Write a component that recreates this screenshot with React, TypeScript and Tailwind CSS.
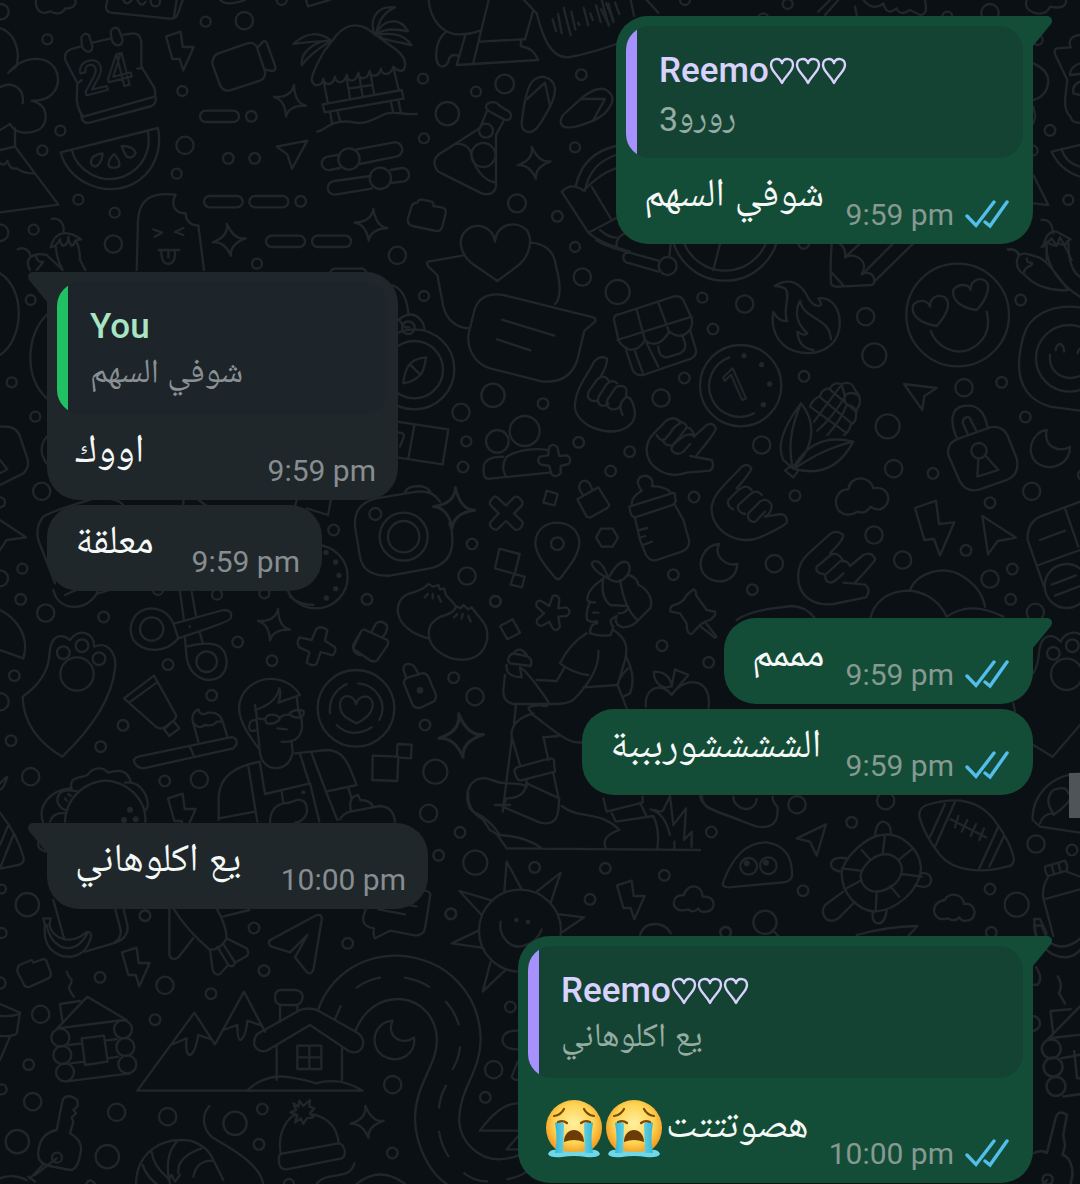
import { clsx } from 'clsx';
import type { ReactNode } from 'react';

type Circle = [number, number, number];

interface DoodleArea {
  x: number;
  y: number;
  scale?: number;
  circles: Circle[];
  dots?: Circle[];
  paths: string[];
}

interface Quote {
  author: string;
  hearts?: number;
  text: string;
}

interface Message {
  id: number;
  mine: boolean;
  text: string;
  time: string;
  size: string;
  spacing: string;
  first?: boolean;
  sobs?: number;
  quote?: Quote;
}

const messages: Message[] = [
  {
    id: 1,
    mine: true,
    text: 'شوفي السهم',
    time: '9:59 pm',
    size: 'w-[417px]',
    spacing: '',
    first: true,
    quote: { author: 'Reemo', hearts: 3, text: 'رورو3' },
  },
  {
    id: 2,
    mine: false,
    text: 'اووك',
    time: '9:59 pm',
    size: 'w-[351px]',
    spacing: 'mt-7',
    first: true,
    quote: { author: 'You', text: 'شوفي السهم' },
  },
  { id: 3, mine: false, text: 'معلقة', time: '9:59 pm', size: 'w-[275px]', spacing: 'mt-[5px]' },
  { id: 4, mine: true, text: 'مممم', time: '9:59 pm', size: 'w-[309px]', spacing: 'mt-[27px]', first: true },
  { id: 5, mine: true, text: 'الششششوربببة', time: '9:59 pm', size: 'w-[451px]', spacing: 'mt-[5px]' },
  { id: 6, mine: false, text: 'يع اكلوهاني', time: '10:00 pm', size: 'w-[381px]', spacing: 'mt-7', first: true },
  {
    id: 7,
    mine: true,
    text: 'هصوتتتت',
    time: '10:00 pm',
    size: 'w-[515px]',
    spacing: 'mt-[27px]',
    first: true,
    sobs: 2,
    quote: { author: 'Reemo', hearts: 3, text: 'يع اكلوهاني' },
  },
];

// Each area is drawn on its own canvas, three units to a pixel unless it has a scale
const areas: DoodleArea[] = [
  {
    x: 0,
    y: 0,
    circles: [
      [142, 118, 15], [617, 65, 15], [547, 273, 15], [754, 349, 16], [181, 392, 15], [127, 451, 15],
      [685, 475, 16], [764, 475, 16], [530, 521, 15], [235, 599, 15], [344, 638, 15], [902, 604, 16],
      [101, 689, 15], [771, 791, 15], [845, 0, 15], [733, 62, 26], [555, 436, 26], [340, 732, 26],
      [3, 35, 23], [0, 698, 25], [466, 5, 14],
    ],
    paths: [
      'M108 0C104 35 130 45 150 34C170 45 190 40 195 25C220 25 230 15 226 0',
      'M322 0L318 20Q318 36 334 38L508 56Q528 58 534 40L548 0M522 50L530 0M370 0q10 20 25 0M412 0q12 25 25 5M660 0Q680 20 735 0M918 0L924 19L990 0',
      'M240 140L215 147Q190 155 196 180L232 250L230 300Q235 335 250 350L464 290Q470 270 455 250L424 200V125Q420 100 400 100L370 104M278 128L330 116M232 250L245 240M412 206L428 204M243 345L247 360Q255 372 270 368L455 318Q470 310 467 290',
      'M244 112Q252 96 266 104L277 138Q278 155 264 155Q250 152 246 138ZM332 94Q340 78 355 86L368 118Q368 136 352 136Q338 132 335 118Z',
      'M640 175Q634 188 640 200L660 255Q668 275 690 271L780 242Q797 235 795 215L770 140Q760 125 742 130L655 160Q643 165 640 175ZM773 142L790 124Q797 122 800 128L826 200Q828 214 815 213L795 209',
      'M182 457L474 384C485 440 470 520 390 556C300 590 205 540 182 457ZM215 449C230 510 300 555 370 530C430 505 455 450 443 392',
      'M308 460Q270 465 273 490Q285 510 300 488Q308 475 308 460ZM342 462Q320 485 328 500Q345 508 358 498Q360 480 342 462ZM365 438Q400 438 407 458Q398 478 380 470Q370 455 365 438Z',
      'M617 332H700a17 17 0 0 1 0 34H617a17 17 0 0 1 0 -34ZM629 588H711a17 17 0 0 1 0 34H629a17 17 0 0 1 0 -34ZM765 588H848a17 17 0 0 1 0 34H765a17 17 0 0 1 0 -34ZM815 707H898a17 17 0 0 1 0 34H815a17 17 0 0 1 0 -34ZM953 707H1036a17 17 0 0 1 0 34H953a17 17 0 0 1 0 -34ZM1010 806H1080a17 17 0 0 1 20 20H990a17 17 0 0 1 20 -20Z',
      'M830 440L922 422L876 506L862 463Z',
      'M0 84C40 95 65 150 48 200L25 218C70 165 140 165 165 205C190 255 160 305 95 302C150 315 145 375 115 390C80 405 45 400 30 372L0 390M0 262C35 240 75 265 68 310M45 385V440M0 450L45 440L175 614L0 637M0 490Q15 500 22 482Q30 510 50 505Q70 520 100 520',
      'M410 810L414 660C418 600 450 575 527 584C510 615 525 640 557 640C558 665 575 678 595 676L612 810M460 688L486 698L464 710M550 684L525 696L550 705M476 750H538M484 755Q484 792 505 792Q527 790 525 755M505 755V772',
      'M155 657C180 650 195 675 190 695M152 742C165 690 205 690 243 718L225 722Q222 735 215 738Q205 725 205 710Q205 735 188 738Q180 730 180 718Q170 740 152 742ZM168 742Q170 780 188 810M228 722Q240 745 240 780L256 810M53 748C75 738 90 755 90 765M90 810C70 775 100 755 140 765L188 810M108 770Q115 790 130 785Q120 800 110 810',
    ],
  },
  {
    x: 300,
    y: 0,
    circles: [
      [369, 236, 15], [528, 275, 15], [844, 224, 16], [372, 415, 15], [825, 442, 15], [772, 649, 16],
      [825, 741, 15], [372, 888, 15], [614, 252, 28], [651, 610, 27], [292, 766, 26], [847, 831, 26],
      [442, 341, 35], [953, 876, 36], [147, 477, 32], [241, 535, 32], [558, 392, 21], [550, 465, 36],
    ],
    paths: [
      'M45 255Q30 245 38 225Q50 190 75 150L110 105Q150 60 200 85L290 150Q325 180 312 208Q300 220 280 200Q275 220 258 222Q245 222 243 206Q238 225 225 227Q210 228 209 213Q205 232 190 235Q176 234 175 218Q170 240 155 242Q142 240 140 225Q135 245 120 247Q106 245 105 230Q100 250 86 252Q70 250 70 236Q68 258 45 255Z',
      'M72 250L83 305M282 210L296 270M140 235L150 293M178 228L188 288M212 222L222 280M150 265L215 255M68 313L305 270L311 296L74 337ZM90 335L97 373M112 332L120 362M272 303L279 335M295 300L302 335M52 395C80 390 85 360 150 365C200 380 230 350 260 340C300 335 310 345 350 342',
      'M225 105C205 60 230 15 285 22C245 40 235 70 228 102C250 55 300 50 324 94C285 85 255 85 228 102M228 104C260 100 310 95 334 136C300 125 260 125 240 110M93 122C60 95 20 95 -20 132C20 125 60 125 93 122C55 120 0 150 5 196Q30 160 93 122',
      'M118 464L83 470A20 20 0 0 0 88 510L120 504M180 492L288 470A20 20 0 0 0 282 427L170 448M272 510L305 504A20 20 0 0 1 308 545L272 549M212 528L102 543A20 20 0 0 0 106 584L215 566',
      'M352 608Q355 597 366 599L395 605Q402 608 400 618L425 622Q440 626 437 640L427 680Q422 695 408 693L338 678Q320 672 324 655L335 618Q340 608 352 608Z',
      'M386 0C390 60 430 105 480 103Q515 102 540 92M566 0L520 188M496 105L470 195L715 180C700 150 690 145 662 138L664 118L675 118L700 30M540 125L664 118M435 98C400 130 405 190 420 198Q440 205 448 175Q455 160 475 168M672 0L710 40C725 100 750 180 810 171Q870 160 950 132',
      'M758 58L768 93M774 42L785 100M791 24L812 106M814 35L826 88M834 68L838 74M851 24L865 76M871 40L878 60M888 16L902 66M905 0L926 76M925 10L940 66M945 8L958 42',
      'M560 335L540 384L418 462Q395 480 408 505Q412 515 425 520L545 580Q580 590 588 560V405L612 360M565 310Q585 300 600 318L628 335Q640 350 625 360Q615 362 600 352L565 332Q550 320 565 310ZM470 432Q500 430 512 455C520 500 550 545 588 547',
      'M670 330C680 270 690 230 730 230C775 240 770 280 750 320C725 365 710 395 690 396Q660 395 666 360ZM680 298L735 248L750 318M785 375Q775 355 800 335L850 290Q890 260 915 268Q945 285 935 310Q920 345 880 362Q800 395 785 375ZM842 297H915L880 360',
      'M828 555Q850 460 948 438M855 572Q870 490 948 465M785 575Q815 545 850 572Q900 520 948 505M785 575L865 698L948 655M875 560L935 660M865 698Q900 730 990 755M900 690Q930 715 948 712M950 745Q945 710 975 700',
      'M585 725C580 680 530 665 500 690C470 715 480 760 515 790L592 843L650 800C690 770 700 720 680 690C650 660 590 670 585 725ZM487 767L385 785Q378 790 385 800L412 825L430 920C440 960 470 985 510 985M690 728C740 730 765 760 768 800Q782 850 778 880Q775 905 765 912',
    ],
  },
  {
    x: 600,
    y: 0,
    circles: [
      [563, 12, 15], [1170, 38, 26], [255, 0, 15], [1350, 391, 16], [1405, 600, 15], [1313, 120, 15],
      [1298, 452, 15], [1042, 50, 15], [490, 55, 15],
    ],
    paths: [
      'M1280 0Q1270 30 1310 40Q1340 45 1350 20Q1400 30 1398 0M3 28L27 76M18 10L40 60M140 0L175 38M92 0L102 48M655 35L690 0M675 45L715 0M770 45L765 20M790 0Q820 35 850 10Q860 50 890 25Q900 50 930 30L960 45Q985 45 975 0',
      'M1440 105Q1400 110 1412 142L1370 145Q1360 150 1366 165L1402 240L1395 300Q1395 340 1412 350Q1415 370 1440 368M1440 190Q1410 200 1410 225L1440 222M1440 245Q1415 255 1420 280L1440 285M1300 190Q1345 210 1345 245Q1340 290 1300 300',
      'M1355 455L1440 435M1355 455Q1380 510 1440 530M1385 450Q1400 490 1440 500M1300 525L1345 615L1300 610M1300 320L1306 350L1300 370',
      'M1325 660Q1355 655 1360 700M1330 740Q1340 690 1370 695L1412 718L1400 725L1395 738L1380 712L1370 738L1355 715L1330 740M1340 740V780M1395 740L1415 780M1225 750Q1250 745 1255 765',
    ],
  },
  {
    x: 0,
    y: 260,
    circles: [
      [92, 120, 15], [35, 367, 15], [106, 470, 15], [125, 694, 26], [67, 926, 15], [1001, 810, 16],
      [0, 727, 15], [0, 955, 24],
    ],
    paths: [
      'M0 40C80 90 70 240 0 285M140 165C80 220 70 350 140 415M0 500Q50 495 60 530L82 595Q90 620 70 640L0 675M0 600L22 628L0 640M0 780L78 832L20 840L0 870M140 530Q110 570 140 610M130 770C160 750 240 730 280 715Q350 710 370 735M130 770Q105 800 115 840L165 970M590 715L620 738M550 718V735M890 720L885 738M993 718L984 765L920 745',
    ],
  },
  {
    x: 390,
    y: 240,
    circles: [
      [937, 173, 15], [969, 267, 16], [883, 414, 16], [459, 491, 16], [229, 604, 15], [219, 681, 16],
      [566, 607, 16], [719, 635, 16], [662, 693, 16], [912, 771, 16], [246, 912, 16], [850, 1004, 16],
      [316, 1084, 16], [213, 517, 26], [813, 474, 26], [231, 1008, 26], [309, 466, 35], [73, 388, 120],
      [73, 389, 86], [55, 263, 19], [322, 604, 34], [404, 573, 45], [502, 911, 19], [1005, -40, 162],
      [1005, -40, 132], [833, 78, 27], [41, 890, 72], [41, 890, 47], [-44, 822, 18],
    ],
    paths: [
      'M255 205Q275 155 340 165L610 232Q622 240 612 248L583 272L562 360C545 410 510 430 455 424L300 385C250 370 230 320 236 280ZM336 239L493 287M321 298L421 331',
      'M25 240Q60 210 88 235Q105 255 103 270M5 135Q50 150 55 222M108 352Q70 355 55 378Q42 400 40 430Q75 425 95 400Q105 380 108 352ZM60 373L90 403M25 238L45 262H58',
      'M20 545L175 568L158 673L20 652M73 556L55 655M22 578Q50 575 38 600L30 620',
      'M475 630Q400 620 350 650Q330 680 348 710M340 650Q290 650 282 675Q275 720 300 716L478 698M478 620Q490 608 502 622L508 648L532 646Q548 660 535 672L512 678L512 700Q498 716 484 702L478 678L452 674Q438 662 450 650L474 646Z',
      'M348 797L372 772Q380 766 390 776Q402 786 396 796L372 820L398 846Q400 856 390 866Q382 872 374 868L348 843L322 868Q312 872 304 862Q296 852 302 846L326 820L302 796Q296 788 306 776Q314 766 322 772Z',
      'M504 1018Q495 1015 485 1000C450 960 435 930 436 905C440 865 470 848 502 848C540 850 565 870 568 905C568 940 545 970 520 1003Q512 1016 504 1018Z',
      'M470 752L503 762L494 796L460 788ZM328 926L389 942L374 1002L315 985ZM372 1002L404 1010L396 1042L362 1034ZM618 893L633 866H668L684 893L668 920H635Z',
      'M562 778L625 742L658 795Q655 805 645 808L600 833L590 830ZM580 765Q560 745 572 728Q585 715 598 730L608 750',
      'M718 800L845 760Q858 755 855 775Q862 785 848 795L735 832Q722 832 718 800ZM725 792Q725 770 755 752Q735 725 750 712Q770 700 785 718Q790 730 785 738Q830 740 842 758M735 835L750 900L768 945Q780 965 800 960L875 935Q900 925 897 900L880 840L855 795M748 870L772 864M750 893L766 888M758 915L786 905',
      'M655 420Q640 400 620 420L596 455Q588 475 605 482Q615 485 625 480M682 430Q665 415 648 435L626 470Q618 490 635 497Q645 500 655 490M708 468Q715 435 690 438Q680 438 675 445L652 480Q645 500 665 508Q690 510 693 490M710 470Q730 475 735 520C735 560 690 580 645 573C590 565 550 530 555 490C560 440 590 410 612 365Q630 345 650 355Q655 370 632 410M710 470Q680 490 698 525',
      'M770 630C770 590 800 575 825 545Q850 525 870 545Q890 550 890 562Q910 565 912 590L950 555Q970 545 978 565Q975 580 920 645M900 648L965 660Q975 680 960 692L890 698C830 720 770 680 770 630M870 550Q850 560 840 580L825 598Q810 605 800 585M890 562L870 590L848 615Q830 620 820 605M912 590Q900 570 860 605Q842 620 845 630Q860 650 880 635L900 612',
      'M672 240Q670 225 690 222L850 170Q870 165 880 180L905 235Q910 260 895 275Q870 300 838 275Q820 305 800 310Q780 315 765 300Q745 335 715 328Q690 315 685 298ZM740 210L765 300M805 188L838 278M682 300L905 230M708 330L728 390Q738 408 760 405L905 355Q920 345 918 330L900 270M735 335L758 398M770 310L805 380M805 320Q805 350 830 352L870 340Q890 330 885 310L878 288',
      'M987 912C940 915 920 970 940 1000C970 1040 1040 1030 1042 972C1010 980 970 950 987 912Z',
      'M618 0Q640 15 690 30L805 62M720 38Q700 38 700 50Q700 68 720 70L805 95M838 50L842 12M990 12L970 90',
      'M178 850Q187 870 187 895Q190 970 120 985L0 1007Q-80 1010 -90 950L-105 860Q-110 790 -40 775L80 755Q130 750 150 785M45 755Q55 738 85 738Q115 740 122 758',
    ],
  },
  {
    x: 730,
    y: 240,
    circles: [
      [221, 10, 16], [872, 180, 16], [222, 409, 16], [815, 427, 16], [886, 531, 16], [609, 700, 16],
      [195, 767, 16], [780, 788, 16], [708, 931, 16], [847, 987, 16], [67, 1049, 16], [842, 1078, 16],
      [1060, 705, 16], [44, 192, 26], [407, 230, 26], [95, 615, 26], [702, 443, 26], [491, 686, 26],
      [905, 754, 26], [432, 885, 26], [518, 960, 26], [133, 971, 26], [780, 1017, 26], [916, 1117, 26],
      [433, 346, 36], [473, 559, 36], [32, 437, 122], [683, 225, 154], [1018, 355, 100], [747, 632, 23],
      [1010, 1038, 66],
    ],
    dots: [[42, 347, 8], [95, 374, 8], [119, 432, 8], [100, 494, 8]],
    paths: [
      'M-2 352A92 92 0 1 0 72 520',
      'M134 138C180 110 215 130 235 175Q255 205 272 195Q275 185 265 175C310 170 335 215 328 265C320 320 270 345 215 338C150 330 120 275 130 215Q145 245 172 243C155 215 185 165 165 145Q150 138 134 138ZM210 182C190 220 205 255 232 280Q220 290 202 275C205 310 220 325 250 330M210 182C220 240 300 230 303 298',
      'M305 12Q300 80 303 132Q310 142 330 140L425 135Q435 130 433 118Q425 90 395 103C420 60 370 35 345 52Q350 20 320 5M345 52L390 10M405 95L495 5M433 125L555 5M305 98L342 138',
      'M600 200C590 175 560 180 550 195C540 225 570 250 620 258C650 225 665 190 645 172C620 160 600 175 600 200ZM722 150C715 130 685 130 670 150C665 185 700 205 740 210C770 180 785 135 765 122C745 110 720 125 722 150ZM602 273C620 320 670 345 715 330C760 310 785 270 770 215',
      'M833 28Q860 25 868 45M885 105C850 85 855 40 885 40L920 50C945 55 970 90 1015 150C960 155 910 135 885 105M890 55Q890 70 905 68Q910 75 895 80Q885 85 880 100M950 15C945 80 1000 140 1050 170M1015 5Q1015 90 1050 110M935 20L950 5Q975 25 985 10L1000 15',
      'M1050 202C960 190 895 230 880 290C855 380 860 470 960 500L1050 512M977 330Q980 310 992 312Q1003 320 1002 335M960 345C955 390 990 415 1025 414Q1040 412 1050 408M1043 340Q1045 325 1055 325',
      'M240 500Q245 480 270 468Q275 445 300 445Q310 425 335 432Q365 420 375 450Q395 470 388 495Q380 505 378 520Q380 545 362 555Q358 575 342 585M240 500L348 578M268 470L365 550M298 447L378 515M335 435Q345 460 345 485M252 545L330 440M262 572Q310 530 350 462Q370 455 382 465M292 585Q330 545 350 495Q365 495 378 510',
      'M213 490C160 560 140 620 160 660L188 685C240 640 270 560 213 490ZM213 490C180 570 175 620 188 685M188 685C220 630 270 580 370 605C330 680 270 710 188 685ZM370 605C310 620 260 640 195 685M165 692L182 678L205 692L190 712Z',
      'M522 432L620 444L583 468L577 510ZM757 828L858 893L803 903L774 943Z',
      'M655 645Q650 610 680 598L780 562Q815 555 832 585L860 655Q870 700 835 718L750 748Q710 760 690 725ZM682 598C660 550 660 505 700 498C745 490 765 520 772 560M712 580L698 548Q700 528 718 532L738 570M745 655L742 710L805 690L765 645',
      'M950 570C905 575 885 640 920 668C965 700 1020 670 1020 620C985 640 940 620 950 570Z',
      'M355 748C360 705 420 705 430 745C480 735 490 795 450 808Q435 810 422 800Q405 825 382 815C350 835 315 820 318 780Q325 748 355 748Z',
      'M555 804L618 782L627 852L673 847L630 946L612 897L583 900Z',
      'M1050 785L930 830Q890 850 893 900L942 1040M925 975L1050 930M1005 805L1045 920M930 900L1005 872M965 1034L1038 1006M975 1067L1050 1038',
      'M302 945Q320 935 335 955L340 965Q350 960 360 978L400 945Q425 932 436 958Q430 970 375 1028M340 1028L405 1034Q425 1050 408 1072L310 1092C240 1100 200 1060 205 1000C210 950 240 940 300 882Q320 868 340 885Q340 900 300 940M302 945L260 980Q255 1000 280 1002M335 960L285 1005Q285 1028 305 1028Q320 1020 340 1000',
      'M540 1050C560 1000 640 970 700 1010Q755 1045 765 1100M420 1140C440 1030 600 1020 650 1130Q720 1080 820 1130M20 1140Q60 1110 185 1098Q230 1100 255 1135',
      'M105 830L155 822Q175 830 170 848Q160 860 90 892C20 920 -60 870 -55 800C-50 760 -10 730 35 680Q55 668 64 685Q60 700 20 745M65 750Q50 730 25 750L-5 780Q-10 800 10 808M95 765Q80 745 58 765L25 795Q18 815 45 822M105 830Q125 820 125 795Q110 770 90 785L55 820Q50 845 75 846L105 815',
    ],
  },
  {
    x: 0,
    y: 590,
    circles: [
      [62, 28, 16], [311, 81, 16], [713, 156, 16], [816, 212, 16], [504, 224, 16], [43, 257, 16],
      [635, 316, 16], [369, 406, 16], [302, 470, 16], [33, 452, 16], [494, 573, 16], [651, 14, 15],
      [793, 10, 15], [474, 0, 15], [435, 977, 16], [5, 897, 13], [137, 69, 26], [92, 560, 26],
      [598, 568, 26], [0, 335, 26], [82, 944, 35], [190, 188, 19], [246, 167, 19], [297, 206, 19],
      [231, 252, 50], [455, 117, 35], [620, 215, 31], [948, -40, 95],
    ],
    dots: [
      [978, -113, 8], [1007, -84, 8], [1017, -44, 8], [1007, -4, 8], [979, 24, 8],
      [390, 659, 9], [407, 688, 9], [372, 690, 9], [569, 110, 4], [910, 607, 6],
    ],
    paths: [
      'M0 60C50 85 90 140 70 205L0 180M160 0C175 70 270 65 295 0M195 15L250 -10M290 12L345 -5M870 20Q900 45 940 45',
      'M68 320Q140 270 148 200C150 130 185 130 210 150C240 110 285 130 282 170C330 150 350 200 345 235C335 330 270 420 187 500C120 460 70 400 68 320Z',
      'M535 145C500 190 430 190 400 150C380 110 400 60 450 55Q500 55 520 100ZM525 100L670 60Q700 60 692 85Q690 95 535 145M540 5L552 92M575 5L588 78M555 145L560 205C570 260 620 285 660 260C690 235 685 180 650 165Q610 155 560 170M600 130L608 158',
      'M948 118Q962 105 982 120L975 152L1005 172Q1010 185 998 196L962 186L950 222Q935 230 920 218L928 186L898 172Q888 160 898 142L935 150ZM1080 130L1060 175Q1060 190 1080 196',
      'M372 325L462 257L528 375Q530 385 520 392L500 408Q485 420 470 412ZM387 338L470 278M492 418L520 392L538 415L508 438Z',
      'M402 515Q400 505 415 500L690 442Q712 440 710 462L700 475L430 535Q410 535 402 515ZM570 472L582 498M595 455L580 400Q570 370 595 358Q600 380 625 368Q660 365 668 395L682 440M580 400Q600 420 612 405Q640 410 650 395L668 395',
      'M765 345Q770 370 770 385M780 480C740 430 700 370 725 320C760 250 860 250 900 315L835 338Q845 310 838 295C830 330 800 350 765 360M770 420Q745 430 748 405Q752 385 770 392L780 490C790 550 870 550 878 485L875 458M890 322L895 360Q910 390 905 420Q895 460 845 455M795 388Q800 372 820 374Q842 378 838 390Q820 405 800 400ZM868 372Q880 355 910 362Q915 378 900 382Q880 385 868 372ZM838 385Q850 372 868 374M832 415L860 418M770 385L795 388',
      'M780 515C700 530 660 560 656 620V690M745 530L772 695M780 520L795 612L930 580L958 695M900 492L928 580M885 490L980 480C1040 480 1050 540 1070 585L978 605L935 490M978 605L1012 690M656 685L765 665M845 605L850 640Q870 640 890 630Q925 625 920 670Q910 695 885 698M850 640Q810 650 810 698',
      'M210 595C150 600 110 650 130 700M215 595C205 560 240 565 262 555C280 530 310 530 325 548Q380 530 392 575M195 695C200 600 290 560 340 575C400 590 440 640 436 695M375 578C430 570 455 640 438 660M235 605Q170 590 172 635Q180 655 195 660M195 625L200 632M205 612L212 618M150 695Q160 665 195 670M115 755Q110 780 140 785',
      'M0 668Q50 730 70 800Q75 820 55 825L0 836M25 705L0 765M40 735L0 835M0 580Q20 560 22 560Q10 600 0 598',
    ],
  },
  {
    x: 340,
    y: 580,
    circles: [
      [81, 58, 16], [466, 64, 16], [341, 293, 16], [966, 197, 16], [1106, 247, 16], [255, 435, 16],
      [360, 757, 16], [296, 826, 16], [584, 862, 16], [796, 865, 16], [973, 886, 16], [1114, 756, 16],
      [750, 958, 16], [332, 1002, 16], [1157, 1057, 16], [405, 350, 26], [266, 700, 26], [286, 575, 36],
      [406, 848, 36], [48, 385, 115], [540, 1052, 123],
    ],
    dots: [[240, 331, 10], [529, 1020, 7], [564, 1026, 7]],
    paths: [
      'M265 175C160 150 150 60 210 40Q250 30 265 12L280 20L295 15L300 28L312 25L318 45L345 75M270 140C250 200 320 245 380 238C440 230 460 160 425 120L405 95L395 82L385 88L370 75L362 85L348 78Q345 100 300 110Q275 125 270 140M255 52L263 42M278 55V42M303 65L295 48M342 112L352 102M365 115L368 102M392 125L385 108',
      'M72 148L142 180Q148 190 140 200L112 240Q105 248 92 242L42 208Q36 198 42 190L65 152ZM95 155L108 130Q125 118 140 135Q145 150 128 172M192 310Q190 298 205 292L245 280Q258 278 265 290L288 345Q290 358 280 365L240 384Q225 385 218 375ZM198 292L190 268Q190 250 210 252L222 258L235 280',
      'M48 372C40 340 0 340 0 375C0 405 20 415 50 430C80 415 100 395 98 370C92 340 55 345 48 372ZM20 312Q-35 340 -30 400M55 310C110 315 145 370 118 420M95 442C60 465 20 465 -10 435',
      'M98 527L175 530L172 603L97 600ZM173 492L215 494L213 535L170 532ZM480 138L518 118L540 158L502 178Z',
      'M638 48Q655 42 658 58L655 85L680 82Q698 95 680 108L655 110L660 140Q650 158 638 145L628 125L605 138Q585 135 592 118L612 100L590 80Q585 62 602 62L628 78Z',
      'M1040 45L1060 28Q1070 30 1068 45L1100 90L1125 95Q1130 105 1110 120L1095 125L1080 135L1055 162Q1040 165 1040 130L1020 100L992 95Q988 88 995 78Q1030 70 1040 45M1098 130L1130 170Q1125 178 1115 165L1082 140',
      'M995 345C960 300 910 330 918 380M995 345C1040 280 1120 300 1105 385M990 320C960 330 940 300 942 275Q990 275 995 320L1005 268L1045 285L998 340',
      'M805 -5C770 -20 745 -50 760 -55Q785 -65 805 -5Q840 -70 865 -50Q880 -20 840 5Q815 5 805 -5M765 15Q740 40 742 60L750 65Q735 100 742 120Q755 130 770 122L772 130Q750 130 750 160Q780 170 812 165L820 140Q800 120 830 108Q820 135 850 142Q880 140 895 120L930 85C945 50 910 20 895 15Q890 -10 865 -15M765 15L790 -5Q780 50 810 75L862 78M840 0C850 60 870 100 890 118M865 80Q860 100 835 100M760 98H775M745 65L765 68',
      'M740 160Q690 190 660 250Q700 280 745 285M775 212Q780 280 700 360Q680 372 645 372L520 372Q488 365 490 330L495 285M672 265L650 303L590 300M820 150C870 180 860 220 855 240L833 315L730 322M833 315L860 385M858 230Q890 290 870 340L850 350M833 310Q845 280 865 265',
      'M505 235Q510 218 530 222L565 230Q578 240 572 258L510 250Q502 245 505 235ZM520 220Q540 195 560 225M500 255Q495 290 545 292L540 262Q560 270 625 365Q625 385 600 375L570 380L565 385L580 405C640 450 690 500 735 485M580 400Q510 420 515 470L540 555M528 375L522 430M610 470L625 540M610 472L655 468',
      'M525 580Q520 570 530 562L630 535Q645 535 642 550L645 575L540 602Q530 600 525 580ZM515 480L488 695M465 675H510M560 600Q560 655 500 655L488 680L600 728Q650 740 655 690L658 655L560 610M640 580L655 650M560 620Q550 610 500 610C460 610 450 590 425 595C370 600 370 690 410 700Q450 720 480 765Q560 770 605 805M385 640Q380 690 430 720L450 750L470 762L500 805L1080 810M665 678C720 720 780 690 838 750Q780 770 798 805M790 655L800 695L908 668V650M815 700L828 725L940 708Q960 750 952 805M900 668L918 705',
      'M932 688Q975 700 990 765M945 690Q960 700 970 690L990 648L1000 735L1038 685L1032 780L1055 755V800M1003 785V805M1085 645Q1085 680 1120 690L1200 720M900 1065Q910 1030 950 1032Q980 1035 992 1060',
      'M1032 945C1040 910 1085 910 1088 950C1130 945 1130 995 1098 995Q1080 998 1075 985Q1060 1002 1045 988Q1010 998 1002 975Q998 945 1032 945Z',
      'M493 935L500 845L545 928M590 935L662 878L632 968M660 1003L733 1012L668 1055M458 962L358 933L425 1005M482 1025C475 1060 500 1100 540 1100Q590 1090 605 1048M415 1052L335 1090L425 1103M452 1145L428 1235L498 1168',
      'M255 932Q275 935 270 950L255 1045Q250 1068 225 1066L150 1052L105 1075Q98 1065 102 1045Q65 1040 70 1010L78 985M115 988L195 1003M190 972L230 979',
      'M0 718Q10 700 30 695L120 678Q160 680 165 725M32 690Q25 650 55 645L60 660Q90 660 100 680M25 625L35 655',
    ],
  },
  {
    x: 700,
    y: 600,
    circles: [
      [455, 667, 16], [309, 872, 16], [870, 867, 16], [77, 997, 16], [874, 997, 16], [1116, 750, 16],
      [291, 614, 26], [557, 602, 26], [1008, 732, 26], [195, 967, 35], [950, 914, 36], [1060, 160, 19],
      [1117, 137, 19], [1100, 223, 47], [146, 799, 25], [205, 797, 25],
    ],
    dots: [[140, 790, 9], [198, 788, 9]],
    paths: [
      'M1000 220Q1015 195 1018 150C1025 100 1060 100 1082 125C1095 95 1130 90 1150 110M1000 435L1058 470L1140 375M940 310L945 335M218 990L235 1008',
      'M0 590Q5 615 50 635L170 680Q240 690 232 620Q215 600 218 590M100 590C100 630 165 645 170 597M290 715L378 673L350 767L330 725Z',
      'M68 850C90 790 130 725 200 727C260 735 278 780 276 830Q270 845 250 847L85 862Q68 862 68 850Z',
      'M658 650Q655 625 680 615C760 590 840 595 890 670Q930 725 942 775Q940 800 920 800C850 820 760 815 720 765Q675 710 658 650ZM735 612L690 710M765 605L705 740M895 680L838 805M912 708L868 800M752 658L858 712M775 648L765 682M802 660L785 695M828 672L812 708M852 685L838 720',
      'M545 705C600 695 660 745 663 805C660 870 590 930 525 935C470 930 425 880 425 820C430 770 500 710 545 705ZM540 765C580 755 610 785 605 815C600 850 560 875 525 875C490 870 475 835 485 815C495 790 520 770 540 765ZM555 705L548 760M635 748L598 778M605 822L665 830M570 858L598 890M530 880L527 932M485 840L440 865M482 812L425 805M485 750L512 780',
      'M525 705Q530 665 550 665Q575 670 572 705M425 815Q390 810 393 790Q400 768 440 775M662 820Q695 815 693 845Q685 870 645 855M430 875L375 915Q360 940 380 958Q405 970 425 945L460 910M518 938Q515 968 535 970Q555 970 560 930',
      'M735 900C745 875 790 880 792 912C830 905 835 960 800 962Q785 965 778 952Q762 968 745 955Q710 965 702 935Q702 905 735 900ZM470 1005Q560 980 652 978L625 1008',
      'M1140 520C1040 525 995 600 998 660L1020 680L1140 698M1020 670Q1030 640 1060 640Q1030 600 1060 570Q1100 555 1105 580M1060 645Q1100 620 1140 560',
      'M1035 800L1095 782Q1105 800 1100 812L1045 828Q1035 820 1035 800ZM1055 796L1062 822M1075 790L1082 816M1045 830Q1025 860 1030 895L1060 1008M1032 898L1140 868M1100 815L1140 830M1002 957H1020L1040 1000M1002 957L1008 1008',
    ],
  },
  {
    x: 0,
    y: 900,
    circles: [
      [435, 47, 16], [762, 84, 16], [300, 232, 16], [792, 212, 16], [633, 281, 16], [465, 359, 16],
      [86, 494, 16], [5, 99, 15], [5, 568, 15], [787, 627, 16], [777, 733, 16], [495, 256, 26],
      [122, 343, 26], [98, 605, 26], [350, 637, 26], [503, 650, 26], [52, 725, 35], [322, 770, 35],
      [705, 670, 35], [0, 249, 17], [181, 413, 27], [187, 465, 27], [195, 517, 27], [369, 388, 27],
      [376, 441, 27], [382, 493, 27], [171, 773, 15],
    ],
    paths: [
      'M130 55H152L148 75C160 120 215 135 258 97Q275 92 273 110C255 180 190 185 150 145Q130 120 135 75ZM140 75C150 140 220 180 262 100M160 0L192 115M345 25L362 90Q365 115 340 130L255 155M370 25L382 75Q388 115 340 130',
      'M58 195L95 180L100 188L130 177Q138 178 140 185L153 220Q152 232 145 235L90 260Q75 265 70 250L52 215Q52 200 58 195ZM200 215Q205 230 215 240Q215 250 207 260Q208 275 222 290',
      'M172 385L262 290L380 360M180 312L240 303M180 312L188 370M172 385L370 360M205 435L245 430M315 422L350 417M212 490L252 485M322 475L355 470M200 544L390 520M245 415L312 407L323 485L255 495Z',
      'M0 312L60 338L50 400Q45 410 0 408M0 348Q40 350 60 340M30 410L0 480',
      'M762 572H412L583 338L645 433L732 275L795 395M512 435L560 415Q555 465 570 465Q585 460 595 405L635 418M670 390L712 375Q712 420 722 420Q738 410 742 362L780 375',
      'M508 25V165Q515 185 535 172L580 115M520 25Q560 90 630 150Q660 150 680 115Q680 80 650 25M630 150L638 210Q645 228 660 222L685 195M680 115L740 145Q750 160 740 168L705 188M652 140L685 195Q700 205 705 188L670 132M668 50L748 30',
      'M170 690L188 600Q195 585 215 590L230 598Q235 605 232 620L220 630L228 640L215 652L220 665L210 700Q245 720 243 750Q235 810 210 810L150 798Q110 790 115 755Q120 700 170 690ZM170 775L105 825M128 795L90 835M0 835Q40 820 80 840M85 830L105 845',
      'M408 852C410 760 480 710 570 722Q620 735 640 780L670 840M428 795Q440 830 470 852M455 755Q460 800 505 835M510 850Q490 770 530 725M535 820Q530 770 605 745M580 830Q590 780 640 782M505 840L515 825L525 845L540 825M628 618C600 650 610 700 650 720C720 760 780 800 790 852M258 852Q270 830 285 852',
    ],
  },
  {
    x: 260,
    y: 880,
    circles: [
      [573, 101, 16], [263, 190, 16], [751, 381, 16], [676, 652, 16], [397, 819, 16], [87, 912, 15],
      [398, 614, 26], [701, 569, 26],
    ],
    paths: [
      'M27 190Q25 182 35 178L170 105Q188 102 185 120L160 270Q152 285 142 278L105 232L142 165L90 217L35 200Q27 196 27 190Z',
      'M175 388C210 290 300 225 415 227C560 235 660 340 662 480C660 580 600 620 597 720C600 790 660 840 720 838Q760 835 790 820M285 455C310 390 360 355 420 357C490 362 530 420 531 480C530 560 465 610 465 720C468 800 510 880 560 912M225 418L242 378M290 323Q320 300 360 293M435 293Q475 300 507 320M558 365Q585 395 596 433M600 502Q595 540 578 567M558 617Q540 650 537 683M537 755Q545 800 565 828M613 880Q645 905 682 904M742 898Q780 890 800 875',
      'M45 350Q45 330 65 330H105Q128 332 128 352Q125 375 105 375H65Q45 373 45 350ZM60 375V425M112 375V390M-8 462L120 390Q150 380 175 392L295 460Q318 480 305 505Q290 525 265 512L150 435L20 512Q-5 520 -17 495Q-20 475 -8 462ZM50 495V600M246 500V600M112 497H184V567H112ZM148 497V567M112 532H184M-35 628Q20 580 90 592Q140 600 168 610Q240 590 308 632H-40',
      'M62 820C50 750 90 710 105 705M160 703Q230 720 236 790M57 835Q55 822 70 820L235 790Q250 790 255 815Q255 830 245 835L80 868Q62 870 57 850ZM100 670L115 680L118 662L130 678L150 660L148 680L163 685L150 700L160 712L140 715L130 732L122 715L105 728L112 705L92 697L108 690Z',
      'M398 422C340 425 325 500 370 528C420 555 470 520 462 472C430 500 375 470 398 422ZM170 912C200 870 270 905 283 850M290 912Q360 855 435 912',
      'M773 670Q720 670 660 752H773M773 770L740 808H773M773 452Q730 450 727 480Q730 508 773 508M773 545L755 590Q758 600 773 600',
    ],
  },
  {
    x: 510,
    y: 920,
    scale: 0.364,
    circles: [[1487, 354, 26], [1492, 404, 26], [1500, 457, 26], [1477, 713, 14], [1436, 284, 20]],
    paths: [
      'M1505 155Q1520 180 1508 200L1525 230M1485 250L1540 245M1485 250L1492 310M1568 235L1480 325L1568 315M1515 380L1568 370M1550 360L1558 435H1568M1520 485L1568 478',
      'M1475 640L1500 540Q1510 520 1530 535L1520 590L1525 620L1518 645C1560 660 1550 750 1510 750Q1480 755 1440 730M1440 640Q1460 630 1475 640M1475 715L1400 785M1440 20C1450 90 1530 130 1568 80M1440 15H1460L1480 60Q1520 90 1568 50M1445 130Q1465 160 1450 178H1440',
    ],
  },
];

// x, y, turn, scale
const sparkles: [number, number, number, number][] = [
  [290, 101, 0, 1], [229, 240, -22, 1], [371, 225, -6, 1], [534, 163, -22, 1], [274, 625, 0, 1],
  [367, 1122, -20, 1], [461, 736, -20, 1.35], [454, 508, -10, 1.25],
];

const bolts: [number, number][] = [[180, 51], [136, 967], [631, 900], [182, 813]];

function Wallpaper() {
  return (
    <svg
      viewBox="0 0 1080 1184"
      preserveAspectRatio="xMinYMin slice"
      aria-hidden="true"
      className="absolute inset-0 h-full w-full fill-none stroke-[#21262a]"
      strokeWidth="7"
      strokeLinecap="round"
      strokeLinejoin="round"
    >
      {areas.map((area) => (
        <g key={`${area.x}-${area.y}`} transform={`translate(${area.x} ${area.y}) scale(${area.scale ?? 1 / 3})`}>
          {area.circles.map(([cx, cy, r]) => (
            <circle key={`${cx}-${cy}-${r}`} cx={cx} cy={cy} r={r} />
          ))}
          {area.dots?.map(([cx, cy, r]) => (
            <circle key={`${cx}-${cy}`} cx={cx} cy={cy} r={r} className="fill-[#21262a] stroke-none" />
          ))}
          <path d={area.paths.join('')} />
        </g>
      ))}
      {sparkles.map(([x, y, turn, scale]) => (
        <path
          key={`${x}-${y}`}
          transform={`translate(${x} ${y}) rotate(${turn}) scale(${scale / 3})`}
          d="M12 -48Q14 6 48 14Q-2 12 -12 46Q-14 -2 -48 -12Q4 -10 12 -48Z"
        />
      ))}
      {bolts.map(([x, y]) => (
        <path
          key={`${x}-${y}`}
          transform={`translate(${x} ${y}) scale(${1 / 3})`}
          d="M-42 -44L2 -58L8 -12L41 -12L10 58L-1 24L-23 24Z"
        />
      ))}
      <text x="84" y="96" fontSize="46" strokeWidth="2" transform="rotate(-14 84 96)" className="font-[Roboto] font-medium">
        24
      </text>
      <text x="731" y="405" fontSize="46" strokeWidth="2" transform="rotate(-24 731 405)" className="font-[Roboto]">
        1
      </text>
    </svg>
  );
}

function Ticks() {
  return (
    <svg
      viewBox="0 0 44 30"
      role="img"
      aria-label="Read"
      className="mr-0.5 ml-[11px] h-[30px] w-11 shrink-0 fill-none stroke-[#53bdeb]"
      strokeWidth="3.4"
      strokeLinecap="round"
    >
      <path d="M2 16L11 25.5L29 2M20 22L25 26L42 2" />
    </svg>
  );
}

function Sob() {
  return (
    <svg viewBox="0 0 56 60" role="img" aria-label="Loudly crying face" className="h-[60px] w-14 shrink-0">
      <defs>
        <radialGradient id="sob-face" cx="50%" cy="42%" r="55%">
          <stop offset="0" stopColor="#fff0a0" />
          <stop offset="0.65" stopColor="#fdd251" />
          <stop offset="1" stopColor="#f29a1f" />
        </radialGradient>
        <linearGradient id="sob-tear" x1="0" x2="1">
          <stop offset="0" stopColor="#35b6d4" />
          <stop offset="0.5" stopColor="#8deaf6" />
          <stop offset="1" stopColor="#35b6d4" />
        </linearGradient>
      </defs>
      <circle cx="28" cy="29" r="28" fill="url(#sob-face)" />
      <path d="M2 55Q4 50 12 51Q28 55 44 51Q52 50 54 55Q52 59 40 58Q28 56 16 58Q4 59 2 55Z" fill="#6fd8e8" />
      <path d="M9 24Q14 21 18 25L17 54H9Q12 40 9 24ZM47 24Q42 21 38 25L39 54H47Q44 40 47 24Z" fill="url(#sob-tear)" />
      <path d="M18 43C18 27 38 27 38 43Q28 39 18 43Z" fill="#6b3c05" />
      <path
        d="M8 17Q15 16 18 10M48 17Q41 16 38 10M12 23Q17 21 21 24M44 23Q39 21 35 24"
        fill="none"
        stroke="#7c4a06"
        strokeWidth="2.2"
        strokeLinecap="round"
      />
    </svg>
  );
}

function Heart() {
  return (
    <svg viewBox="0 0 26 28" aria-hidden="true" className="h-7 w-[26px] fill-none stroke-[#d9d2ff]" strokeWidth="2.4" strokeLinejoin="round">
      <path d="M13 6C11 0 2 1 2 8C2 14 9 18 13 26C17 18 24 14 24 8C24 1 15 0 13 6Z" />
    </svg>
  );
}

function QuoteBox({ quote, mine }: { quote: Quote; mine: boolean }) {
  return (
    <blockquote
      className={clsx('mx-2.5 mt-2.5 flex overflow-hidden rounded-[24px]', mine ? 'bg-[#154333]' : 'bg-[#1d242a]')}
    >
      <span className={clsx('w-[11px] shrink-0', mine ? 'bg-[#a791ff]' : 'bg-[#21c063]')} />
      <div className="min-w-0 px-[22px] pt-[21px] pb-[15px]">
        <p
          className={clsx(
            'flex h-12 items-center text-[35px] leading-[48px] font-medium',
            mine ? 'text-[#d9d2ff]' : 'text-[#a8e5c4]',
          )}
        >
          {quote.author}
          {Array.from({ length: quote.hearts ?? 0 }, (_, i) => (
            <Heart key={i} />
          ))}
        </p>
        <p
          dir="rtl"
          className={clsx('h-12 text-left text-[34px] leading-[48px]', mine ? 'text-[#95ada3]' : 'text-[#8a9093]')}
        >
          {quote.text}
        </p>
      </div>
    </blockquote>
  );
}

function Tail({ mine }: { mine: boolean }) {
  return (
    <svg
      viewBox="0 0 40 30"
      aria-hidden="true"
      className={clsx(
        'absolute top-0 h-[30px] w-10',
        mine ? '-right-5 fill-[#144d37]' : '-left-5 -scale-x-100 fill-[#1f272a]',
      )}
    >
      <path d="M0 0H35Q41 2 38 8L20 30H0Z" />
    </svg>
  );
}

function Bubble({ message, children }: { message: Message; children: ReactNode }) {
  return (
    <li
      className={clsx(
        'relative max-w-full rounded-[32px]',
        message.size,
        message.spacing,
        message.mine ? 'self-end bg-[#144d37]' : 'self-start bg-[#1f272a]',
        message.first && (message.mine ? 'rounded-tr-none' : 'rounded-tl-none'),
      )}
    >
      {message.first && <Tail mine={message.mine} />}
      <div className="relative">{children}</div>
    </li>
  );
}

function App() {
  return (
    <main className="relative min-h-screen overflow-hidden bg-[#0b1014] font-[Roboto,'Noto_Naskh_Arabic_UI','Noto_Naskh_Arabic','Noto_Sans_Arabic','DejaVu_Sans',sans-serif]">
      <Wallpaper />
      <ul className="relative flex flex-col px-[47px] pt-4">
        {messages.map((message) => (
          <Bubble key={message.id} message={message}>
            {message.quote && <QuoteBox quote={message.quote} mine={message.mine} />}
            <div
              className={clsx('flex items-end justify-between pr-[22px] pl-7', message.sobs ? 'h-[105px]' : 'h-[86px]')}
            >
              <p
                dir="rtl"
                className={clsx(
                  'flex items-center gap-1 text-[40px] leading-[52px] whitespace-nowrap text-[#f4f8f6]',
                  message.sobs ? 'pb-6' : 'pb-5',
                )}
              >
                {message.text}
                {Array.from({ length: message.sobs ?? 0 }, (_, i) => (
                  <Sob key={i} />
                ))}
              </p>
              <div
                className={clsx(
                  'flex items-center pb-[11px] text-[30px] leading-9',
                  message.mine ? 'text-[#869a92]' : 'text-[#878d90]',
                )}
              >
                <time>{message.time}</time>
                {message.mine && <Ticks />}
              </div>
            </div>
          </Bubble>
        ))}
      </ul>
      <div className="absolute top-[773px] right-0 h-[45px] w-[11px] bg-[#4f5458]" />
    </main>
  );
}

export default App;
